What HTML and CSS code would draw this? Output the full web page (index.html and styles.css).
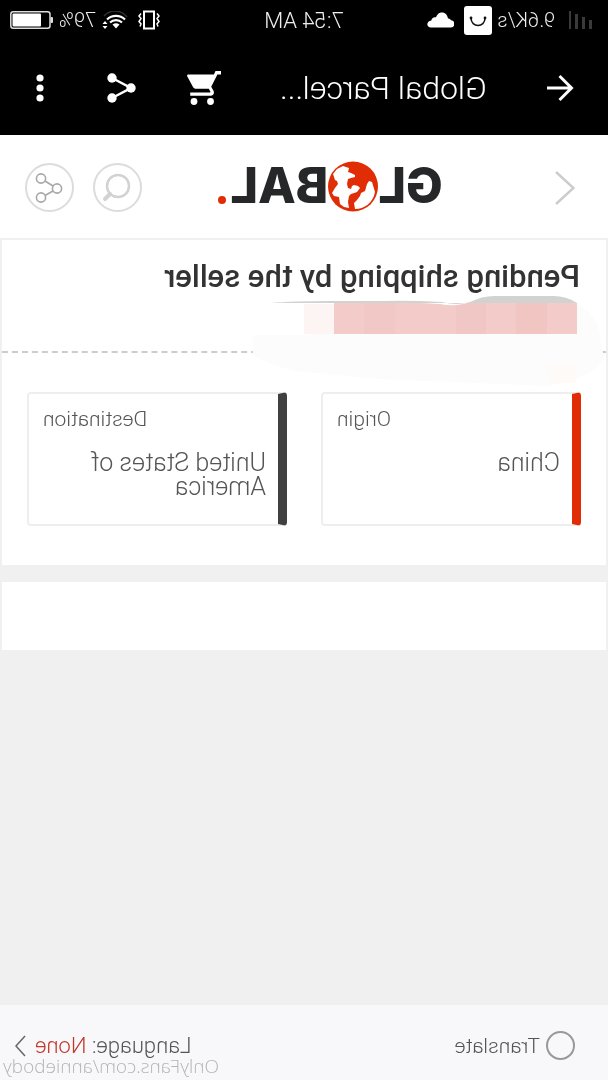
FILE: index.html
```html
<!DOCTYPE html>
<html lang="en">
<head>
    <meta charset="UTF-8">
    <meta name="viewport" content="width=device-width, initial-scale=1.0">
    <title>Global Parcel Tracking</title>
    <link rel="stylesheet" href="styles.css">
</head>
<body>
    <!-- The whole screen is flipped in the stylesheet -->
    <div class="screen">
        <div class="status-bar">
            <div class="status-left">
                <svg width="24" height="18" viewBox="0 0 24 18" fill="#3a3a3a">
                    <rect x="0" y="9" width="3" height="9"/>
                    <rect x="7" y="6" width="3" height="12"/>
                    <rect x="14" y="3" width="3" height="15"/>
                    <rect x="21" y="0" width="2" height="18"/>
                </svg>
                <span class="speed">9.6K/s</span>
                <svg width="28" height="29" viewBox="0 0 28 29">
                    <rect width="28" height="29" rx="3" fill="#fff"/>
                    <path d="M7 12c0 10 14 10 14 0" fill="none" stroke="#111" stroke-width="1.5"/>
                    <circle cx="7" cy="12" r="1.4" fill="#111"/>
                    <circle cx="21" cy="12" r="1.4" fill="#111"/>
                </svg>
                <svg class="cloud" width="27" height="16" viewBox="0 0 27 16" fill="#fff">
                    <path d="M3.500 15.500a3.600 3.600 0 0 1-.5-7.200C3.500 7 5 6.500 6 6.500 7 2 9.500.5 12 .5c3.500 0 5 2.200 6 4.800 2.500-.6 4.500 1 4.700 3.200 2.500.3 4 1.800 4 3.800 0 2-1.500 3.200-3.500 3.200z"/>
                </svg>
            </div>
            <span class="clock">7:54 AM</span>
            <div class="status-right">
                <svg width="22" height="20" viewBox="0 0 22 20" fill="none" stroke="#fff" stroke-width="1.500">
                    <rect x="6" y="1.500" width="10" height="17" stroke-width="2"/>
                    <path d="M3 3.500L1 6l2 2.500-2 3L3 14l-1 2.500M19 3.500L21 6l-2 2.500 2 3-2 2.500 1 2.500"/>
                </svg>
                <svg class="wifi" width="26" height="18" viewBox="0 0 26 18" fill="none" stroke="#fff" stroke-width="2.200">
                    <path d="M1 6a15 15 0 0 1 23-1" stroke="#333" stroke-width="1.500"/>
                    <path d="M3 8.500a13 13 0 0 1 18 0M6 11.500a9 9 0 0 1 12 0"/>
                    <path d="M8.500 13.500a6 6 0 0 1 7 0L12 17.500z" fill="#fff" stroke="none"/>
                    <path d="M23 10l2.500 3h-5zM23 18l2.500-3h-5z" fill="#fff" stroke="none"/>
                </svg>
                <span>79%</span>
                <svg width="43" height="18" viewBox="0 0 43 18">
                    <rect x="3" y=".8" width="39.200" height="16.400" rx="2.500" fill="none" stroke="#ddd" stroke-width="1.500"/>
                    <rect x="12" y="2.500" width="28.500" height="13" rx="1" fill="#fff"/>
                    <rect x="0" y="6" width="2.500" height="6" rx="1" fill="#ddd"/>
                </svg>
            </div>
        </div>

        <header class="app-bar">
            <button class="icon-button" aria-label="Back">
                <svg width="28" height="28" viewBox="0 0 28 28" fill="none" stroke="#fff" stroke-width="3">
                    <path d="M27 14H3M14.500 2L2.500 14l12 12"/>
                </svg>
            </button>
            <h1>Global Parcel...</h1>
            <div class="app-actions">
                <button class="icon-button" aria-label="Cart">
                    <svg width="34" height="34" viewBox="0 0 34 34" fill="#fff">
                        <path d="M0 0h5.500l1.600 3.600h25.400c1.200 0 1.800 1 1.200 2L28 16c-.6 1.200-1.600 1.800-3 1.800H12.200l-1.500 2.800c-.2.500 0 .8.400.8h19.700v3.400H10.500c-2.800 0-4.200-2.600-3-5l2.300-4.100L3.600 3.400H0z"/>
                        <circle cx="10.500" cy="30.500" r="3.400"/>
                        <circle cx="27" cy="30.500" r="3.400"/>
                    </svg>
                </button>
                <button class="icon-button" aria-label="Share">
                    <svg width="29" height="30" viewBox="0 0 29 30" fill="#fff">
                        <path d="M24 5L5 15l19 10" fill="none" stroke="#fff" stroke-width="2.500"/>
                        <circle cx="24" cy="5" r="4.700"/>
                        <circle cx="5" cy="15" r="4.700"/>
                        <circle cx="24" cy="25" r="4.700"/>
                    </svg>
                </button>
                <button class="icon-button more" aria-label="More">
                    <svg width="8" height="28" viewBox="0 0 8 28" fill="#fff">
                        <circle cx="4" cy="4" r="3.600"/>
                        <circle cx="4" cy="14" r="3.600"/>
                        <circle cx="4" cy="24" r="3.600"/>
                    </svg>
                </button>
            </div>
        </header>

        <div class="site-header">
            <button class="icon-button" aria-label="Previous page">
                <svg width="20" height="34" viewBox="0 0 20 34" fill="none" stroke="#ccc" stroke-width="2.500">
                    <path d="M19 1L1.500 17 19 33"/>
                </svg>
            </button>
            <div class="logo">
                <span>GL</span>
                <svg width="50" height="51" viewBox="0 0 50 51">
                    <circle cx="25" cy="25.500" r="25" fill="#e12d05"/>
                    <path d="M45 13l-4-5-6-3-3 1-3 1 1 4-3 1-4 2v2l4 1 3 1 1 5-1 4-3 1-1-3-2-1-4 1-2 2 3 4 6 2 2 2 1 6-1 6 5-1 4-3 1-7 5-1 2-3-3-5-3-4 1-3 2-1z" fill="#fff"/>
                    <path d="M6 21l3-1 2 3 2 7 4 2 1 3 3 4 3 3-1 6C14 48 5 42 3 31z" fill="#fff"/>
                </svg>
                <span>BAL</span>
                <svg class="logo-dot" width="8" height="8" viewBox="0 0 8 8"><circle cx="4" cy="4" r="4" fill="#e12d05"/></svg>
            </div>
            <div class="site-actions">
                <button class="round-button" aria-label="Search">
                    <svg width="30" height="30" viewBox="0 0 30 30" fill="none" stroke="#d2d2d2">
                        <circle cx="14" cy="13" r="11" stroke-width="2.500"/>
                        <path d="M22 21l5 5" stroke-width="4" stroke-linecap="round"/>
                    </svg>
                </button>
                <button class="round-button" aria-label="Share page">
                    <svg width="30" height="30" viewBox="0 0 30 30" fill="none" stroke="#a8a8a8" stroke-width="1.600">
                        <circle cx="23" cy="5.500" r="4.600"/>
                        <circle cx="7" cy="15.500" r="4.600"/>
                        <circle cx="23" cy="24.500" r="4.600"/>
                        <path d="M19 8l-8 5M19 22.500L11 18"/>
                    </svg>
                </button>
            </div>
        </div>

        <main>
            <section class="panel">
                <div class="panel-top">
                    <h2>Pending shipping by the seller</h2>
                    <!-- Blurred-out tracking number -->
                    <svg class="smudge" width="358" height="95" viewBox="0 0 358 95">
                        <path d="M8 42Q12 20 30 12H300V42H355V62Q340 72 312 78L230 86 60 93Q14 84 4 66z" fill="#fcfcfc"/>
                        <path d="M31 10Q42 3 54 3h60q12 0 24 6 14 4 28 0 34-2 60-1h50q40 0 61 2H31z" fill="#d2d2d2"/>
                        <path d="M31 10h109q14 4 28 1 30-2 48-1h58v31H31z" fill="#f3cbc9"/>
                        <path d="M61 10h31v31H61z" fill="#f0c5c2"/>
                        <path d="M122 10h18q7 2 12 2v29h-30z" fill="#f1c7c6"/>
                        <path d="M213 10h31v31h-31z" fill="#f2c8c6"/>
                        <path d="M274 11h30v30h-30z" fill="#fcf5f4"/>
                        <path d="M32 72h29v18H32z" fill="#fefaf8"/>
                    </svg>
                </div>
                <div class="places">
                    <div class="place origin">
                        <h3>Origin</h3>
                        <p>China</p>
                    </div>
                    <div class="place destination">
                        <h3>Destination</h3>
                        <p>United States of America</p>
                    </div>
                </div>
            </section>
            <section class="panel panel-empty"></section>
        </main>

        <footer>
            <label class="translate">
                <input type="radio" name="translate">
                Translate
            </label>
            <button class="language">
                <span>Language: <span class="language-value">None</span></span>
                <svg width="11" height="22" viewBox="0 0 11 22" fill="none" stroke="#666" stroke-width="1.500">
                    <path d="M1 1l9 10-9 10"/>
                </svg>
            </button>
            <span class="watermark">OnlyFans.com/anniebody</span>
        </footer>
    </div>
</body>
</html>
```

FILE: styles.css
```css
* {
    box-sizing: border-box;
}
body {
    margin: 0;
    font-family: Roboto, Arial, sans-serif;
    font-weight: 300;
    background-color: #f0f0f0;
    color: #555;
}
h1, h2, h3, p {
    margin: 0;
}
button {
    border: none;
    background: none;
    padding: 0;
    font: inherit;
    color: inherit;
    cursor: pointer;
}
svg {
    display: block;
    flex: none;
}
.screen {
    display: flex;
    flex-direction: column;
    min-height: 100vh;
    transform: scaleX(-1);
}

/* Status bar */
.status-bar {
    display: grid;
    grid-template-columns: 1fr auto 1fr;
    align-items: center;
    height: 40px;
    padding: 0 10px 0 16px;
    background-color: #000;
    color: #eee;
    font-size: 20px;
}
.status-left, .status-right {
    display: flex;
    align-items: center;
}
.status-left {
    gap: 5px;
}
.status-right {
    justify-content: flex-end;
    gap: 6px;
}
.speed {
    margin-left: 8px;
}
.cloud {
    margin-left: 5px;
}
.wifi {
    margin-left: 4px;
}
.clock {
    margin-right: 6px;
    font-size: 22px;
}

/* App bar */
.app-bar {
    display: flex;
    align-items: center;
    height: 95px;
    padding: 0 36px 0 34px;
    background-color: #000;
    color: #fff;
}
.app-bar h1 {
    flex: 1;
    margin-left: 59px;
    font-size: 32px;
    font-weight: 300;
}
.app-actions {
    display: flex;
    align-items: center;
    gap: 51px;
}
.more {
    margin-left: 12px;
}

/* Site header */
.site-header {
    display: flex;
    align-items: center;
    justify-content: space-between;
    height: 103px;
    padding: 2px 25px 0 33px;
    background-color: #fff;
}
.logo {
    display: flex;
    align-items: center;
    margin: 0 0 3px 36px;
    font-family: Inter, Arial, sans-serif;
    font-size: 49px;
    font-weight: 800;
    line-height: 50px;
    color: #262728;
}
.logo-dot {
    margin: 28px 0 0 4px;
}
.site-actions {
    display: flex;
    gap: 19px;
}
.round-button {
    display: flex;
    align-items: center;
    justify-content: center;
    width: 49px;
    height: 49px;
    border: 2px solid #dcdcdc;
    border-radius: 50%;
}

/* Content */
main {
    flex: 1;
}
.panel {
    background-color: #fff;
    border: 2px solid #f0f0f0;
    border-bottom: none;
}
.panel-top {
    position: relative;
    height: 113px;
    padding: 17px 26px;
    border-bottom: 2px dashed #ccc;
}
.panel-top h2 {
    font-size: 31px;
    line-height: 40px;
    font-weight: 500;
    color: #333;
}
.smudge {
    position: absolute;
    left: -2px;
    top: 53px;
}
.places {
    display: grid;
    grid-template-columns: 1fr 1fr;
    gap: 34px;
    padding: 39px 25px;
}
.place {
    height: 134px;
    padding: 13px 14px 12px 12px;
    border: 2px solid #eee;
    border-left: 9px solid #404040;
    border-radius: 4px;
}
.origin {
    border-left-color: #e12d05;
}
.place h3 {
    font-size: 21px;
    line-height: 24px;
    font-weight: 300;
    text-align: right;
}
.place p {
    margin-top: 20px;
    font-size: 25px;
    line-height: 24px;
}
.panel-empty {
    height: 70px;
    margin-top: 15px;
}

/* Footer */
footer {
    position: relative;
    display: flex;
    align-items: center;
    justify-content: space-between;
    height: 75px;
    padding: 6px 15px 0 33px;
    background-color: #f8f8fb;
    font-size: 21px;
}
.translate {
    display: flex;
    align-items: center;
    gap: 6px;
}
.translate input {
    appearance: none;
    width: 29px;
    height: 29px;
    margin: 0;
    border: 2px solid #999;
    border-radius: 50%;
}
.translate input:checked {
    background-color: #c0392b;
}
.language {
    display: flex;
    align-items: center;
    gap: 9px;
    font-size: 22px;
}
.language-value {
    color: #c0392b;
}
.watermark {
    position: absolute;
    right: 3px;
    bottom: 2px;
    font-family: "Open Sans", "Noto Sans", sans-serif;
    font-size: 19px;
    line-height: 24px;
    color: #b4b4b4;
}
```
